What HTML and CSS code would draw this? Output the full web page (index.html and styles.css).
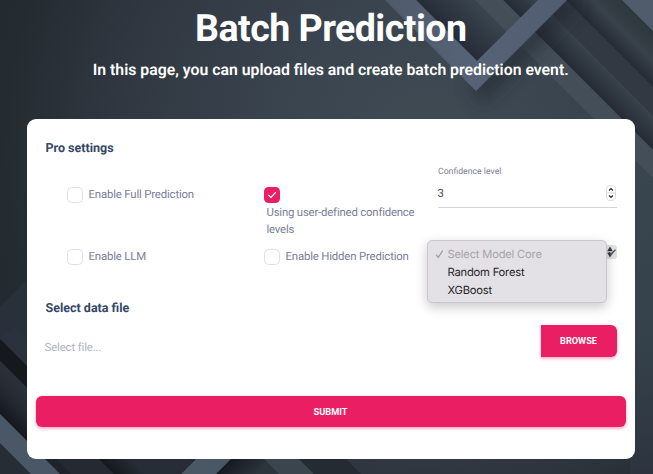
FILE: index.html
```html
<!DOCTYPE html>
<html lang="en">
<head>
<meta charset="utf-8">
<title>Batch Prediction</title>
<link rel="stylesheet" href="styles.css">
</head>
<body>
<svg class="backdrop" viewBox="0 0 653 474" aria-hidden="true">
  <defs>
    <radialGradient id="base" gradientUnits="userSpaceOnUse" cx="430" cy="150" r="450">
      <stop offset="0" stop-color="#404b54"/><stop offset=".35" stop-color="#3a444e"/><stop offset=".7" stop-color="#303741"/><stop offset=".95" stop-color="#242c31"/><stop offset="1" stop-color="#232a30"/>
    </radialGradient>
    <linearGradient id="right" gradientUnits="userSpaceOnUse" x1="0" y1="120" x2="0" y2="474">
      <stop offset="0" stop-color="#3b4650"/><stop offset=".6" stop-color="#35424b"/><stop offset="1" stop-color="#2d3440"/>
    </linearGradient>
    <linearGradient id="s1" gradientUnits="userSpaceOnUse" x1="503" y1="0" x2="520" y2="-17"><stop offset="0" stop-color="#252b35"/><stop offset="1" stop-color="#38434c"/></linearGradient>
    <linearGradient id="s2" gradientUnits="userSpaceOnUse" x1="566" y1="0" x2="594" y2="-28"><stop offset="0" stop-color="#262b34"/><stop offset=".45" stop-color="#384049"/><stop offset="1" stop-color="#2e363e"/></linearGradient>
    <linearGradient id="s3" gradientUnits="userSpaceOnUse" x1="416" y1="0" x2="445" y2="-29"><stop offset="0" stop-color="#252c37"/><stop offset="1" stop-color="#3a444e"/></linearGradient>
    <linearGradient id="v" gradientUnits="userSpaceOnUse" x1="385" y1="0" x2="567" y2="0"><stop offset="0" stop-color="#4f5b6b"/><stop offset=".5" stop-color="#566276"/><stop offset="1" stop-color="#515c70"/></linearGradient>
    <linearGradient id="d1" gradientUnits="userSpaceOnUse" x1="10" y1="349" x2="21" y2="338"><stop offset="0" stop-color="#15191e"/><stop offset="1" stop-color="#22272e"/></linearGradient>
    <linearGradient id="d2" gradientUnits="userSpaceOnUse" x1="0" y1="414" x2="27" y2="387"><stop offset="0" stop-color="#14181d"/><stop offset=".5" stop-color="#252a32"/><stop offset="1" stop-color="#2b303a"/></linearGradient>
    <linearGradient id="d3" gradientUnits="userSpaceOnUse" x1="106" y1="466" x2="122" y2="450"><stop offset="0" stop-color="#14181d"/><stop offset="1" stop-color="#272d36"/></linearGradient>
    <linearGradient id="d4" gradientUnits="userSpaceOnUse" x1="223" y1="466" x2="244" y2="487"><stop offset="0" stop-color="#14191e"/><stop offset="1" stop-color="#2c343c"/></linearGradient>
    <filter id="soft" x="-50%" y="-50%" width="200%" height="200%"><feGaussianBlur stdDeviation="8"/></filter>
  </defs>
  <rect width="653" height="474" fill="url(#base)"/>
  <rect x="630" y="120" width="23" height="354" fill="url(#right)"/>
  <path d="M416 0 475 0 507 32 477 61Z" fill="url(#s3)"/>
  <path d="M503 0H566L653 87V150Z" fill="url(#s1)"/>
  <path d="M538 0H566L653 87V116Z" fill="#333943"/>
  <path d="M566 0H622L653 31V87Z" fill="url(#s2)"/>
  <path d="M622 0H653V31Z" fill="#505b6c"/>
  <path d="M475 0H503L653 150V178Z" fill="#434e59"/>
  <path d="M476 97 574 -1" stroke="#20262f" stroke-width="22" opacity=".55" filter="url(#soft)"/>
  <path d="M385 0H416L477 61 538 0H567L476 91Z" fill="url(#v)"/>
  <path d="M0 307 30 277V474H0Z" fill="#2a3039"/>
  <path d="M0 337 15 326 30 341V370Z" fill="#2b323d"/>
  <path d="M0 339 30 369V391L0 361Z" fill="url(#d1)"/>
  <path d="M0 361 30 391V444L0 414Z" fill="url(#d2)"/>
  <path d="M0 443 31 474H0Z" fill="#272d35"/>
  <path d="M44 458H297L313 474H60Z" fill="#1f242a"/>
  <path d="M55 458H99L115 474H71Z" fill="#252a32"/>
  <path d="M98 458H196L180 474H114Z" fill="url(#d3)"/>
  <path d="M0 414 60 474H31L0 443Z" fill="#4a5767"/>
  <path d="M231 458H297L313 474H215Z" fill="url(#d4)"/>
  <path d="M197 458H232L216 474H181Z" fill="#4a5765"/>
  <path d="M263 458H298L314 474H279Z" fill="#3a454e"/>
  <path d="M298 458H345L361 474H314Z" fill="#242b33"/>
</svg>
<main class="page">
  <header class="hero">
    <h1 class="hero-title">Batch Prediction</h1>
    <p class="hero-text">In this page, you can upload files and create batch prediction event.</p>
  </header>
  <form class="card">
    <h2 class="heading">Pro settings</h2>
    <div class="settings">
      <label class="option"><span class="box"></span><span class="label">Enable Full Prediction</span></label>
      <label class="option wrap"><span class="box checked"><svg viewBox="0 0 16 16"><path d="M4.3 7.9 7 10.4 11.8 5.2"/></svg></span><span class="label">Using user-defined confidence levels</span></label>
      <div class="confidence">
        <span class="caption">Confidence level</span>
        <div class="number"><span>3</span>
          <svg class="stepper" viewBox="0 0 10 16"><rect x=".5" y=".5" width="9" height="15" rx="3.5"/><path class="split" d="M.5 8H9.5"/><path d="M3 5.5 5 3.7 7 5.5M3 10.5 5 12.3 7 10.5"/></svg>
        </div>
      </div>
      <label class="option"><span class="box"></span><span class="label">Enable LLM</span></label>
      <label class="option"><span class="box"></span><span class="label">Enable Hidden Prediction</span></label>
      <div class="select">
        <svg class="arrows" viewBox="0 0 14 14"><rect x="0" y="0" width="14" height="14" rx="3"/><path class="solid" d="M4.2 6.2 7 1.6 9.8 6.2ZM4.2 7.8 7 12.4 9.8 7.8Z"/><path d="M6 7.3 8 9.5 12.5 4.6"/></svg>
        <ul class="menu">
          <li class="current"><svg viewBox="0 0 10 10"><path d="M1.2 5.8 3.6 8.8 8.6 1.2"/></svg>Select Model Core</li>
          <li>Random Forest</li>
          <li>XGBoost</li>
        </ul>
      </div>
    </div>
    <h2 class="heading">Select data file</h2>
    <div class="file">
      <span class="placeholder">Select file...</span>
      <button class="browse" type="button">BROWSE</button>
    </div>
    <button class="submit" type="button">SUBMIT</button>
  </form>
</main>
</body>
</html>
```
FILE: styles.css
```css
* { box-sizing: border-box; }
body { margin: 0; width: 653px; height: 474px; overflow: hidden; background: #303741; font-family: Roboto, "Liberation Sans", sans-serif; text-rendering: geometricPrecision; }
.backdrop { position: absolute; top: 0; left: 0; width: 653px; height: 474px; }
.page { position: relative; padding: 0 18px 0 26.5px; }
.hero { height: 119px; padding: 4px 0 0; text-align: center; color: #fff; white-space: nowrap; }
.hero-title { margin: 0; font-size: 37.6px; line-height: 50px; font-weight: 700; letter-spacing: -.55px; }
.hero-text { margin: 3.5px 0 0; font-size: 15.8px; line-height: 24px; font-weight: 600; }
.card { width: 608.5px; height: 340px; padding: 20px 9px 0; background: #fff; border-radius: 9px; }
.heading { margin: 0 0 0 10px; font-size: 12.5px; line-height: 20px; font-weight: 700; color: #344767; }
.settings { display: grid; grid-template-columns: 197px 174px 179px; grid-template-rows: 80px 61px; margin: -1.5px 0 .5px 31px; }
.option { display: flex; align-items: flex-start; padding-top: 29px; font-size: 11.4px; line-height: 17px; letter-spacing: -.17px; color: #7b809a; }
.option .label { margin: -1px 0 0 6px; white-space: nowrap; }
.option.wrap { flex-direction: column; }
.option.wrap .label { width: 156px; margin: 1px 0 0 3px; line-height: 17.5px; letter-spacing: -.2px; white-space: normal; }
.settings > :nth-child(n+4) { padding-top: 11px; }
.box { flex: none; width: 16px; height: 16px; border: 1px solid #dce1e9; border-radius: 4.5px; }
.checked { border: 0; background: #e91e63; }
.box svg { display: block; width: 16px; height: 16px; }
.box path { fill: none; stroke: #fff; stroke-width: 1.2; }
.confidence { padding-top: 7px; height: 50px; border-bottom: 1px solid #d2d6da; }
.caption { display: block; margin-left: .5px; font-size: 8.7px; line-height: 14px; color: #7b809a; }
.number { display: flex; justify-content: space-between; margin-top: 6.5px; padding-right: 1px; font-size: 11.4px; line-height: 17px; color: #495057; }
.stepper { width: 10px; height: 16px; }
.stepper rect { fill: #fff; stroke: #dedede; }
.stepper path { fill: none; stroke: #333; stroke-width: 1.3; }
.stepper .split { stroke: #d5d5d5; stroke-width: 1; }
.select { position: relative; display: flex; justify-content: flex-end; }
.settings > .select { padding-top: 7.5px; }
.arrows { width: 14px; height: 14px; }
.arrows rect { fill: #e2e2e2; }
.arrows path { fill: none; stroke: #495057; stroke-width: 1.4; }
.arrows .solid { fill: #343a40; stroke: none; }
.menu { position: absolute; top: 2.5px; left: -11px; width: 180px; height: 63px; margin: 0; padding: 3.5px 0 0 20px; list-style: none; background: #e4e1e6; border: 1px solid #cac8cc; border-radius: 5px; box-shadow: 0 4px 12px rgba(0,0,0,.22); font-family: Inter, sans-serif; font-size: 11.2px; line-height: 18px; letter-spacing: -.2px; color: #262528; }
.menu li { display: flex; }
.menu .current { margin-left: -13px; color: #a7a4a9; }
.menu svg { width: 9px; height: 10px; margin: 4.5px 4px 0 0; }
.menu path { fill: none; stroke: #a09da2; stroke-width: 1.4; }
.file { display: flex; justify-content: space-between; height: 70.5px; margin: 6px 9.5px 0 9px; }
.placeholder { padding-top: 14px; font-size: 11.4px; line-height: 17px; letter-spacing: -.13px; color: #adb5bd; }
.browse, .submit { display: block; border: 0; padding: 0; background: #e91e63; color: #fff; font-family: inherit; font-weight: 700; font-size: 9.2px; box-shadow: 0 2px 2px rgba(233,30,99,.18), 0 1px 4px rgba(233,30,99,.25); }
.browse { width: 76px; height: 32px; padding-bottom: 1px; border-radius: 0 6px 6px 0; }
.submit { width: 590px; height: 31px; border-radius: 6px; }
```
